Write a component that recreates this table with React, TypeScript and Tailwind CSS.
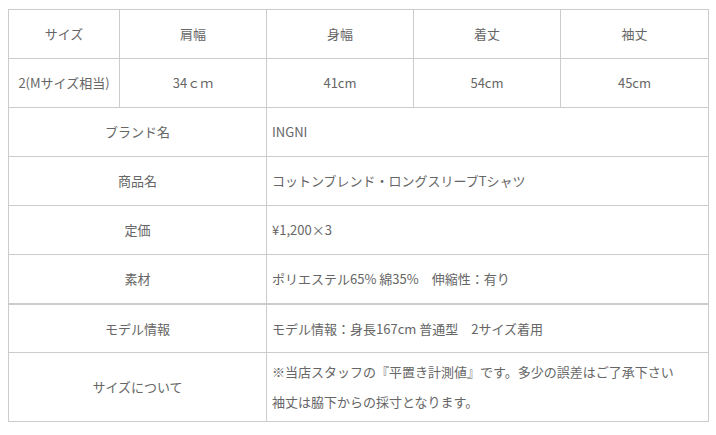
export default function App() {
  const cell = "border border-[#cccccc] text-center align-middle";
  const label = "border border-[#cccccc] text-center align-middle h-[49px]";
  const value = "border border-[#cccccc] text-left align-middle pl-[5px]";

  return (
    <div className="min-h-screen bg-white pt-[9px] pl-[8px] font-['Noto_Sans_CJK_JP',sans-serif] text-[13px] text-[#666666]">
      <table className="table-fixed border-collapse w-[700px]">
        <colgroup>
          <col className="w-[111px]" />
          <col className="w-[147px]" />
          <col className="w-[147px]" />
          <col className="w-[147px]" />
          <col className="w-[148px]" />
        </colgroup>
        <tbody>
          <tr className="h-[49px]">
            <td className={cell}>サイズ</td>
            <td className={cell}>肩幅</td>
            <td className={cell}>身幅</td>
            <td className={cell}>着丈</td>
            <td className={cell}>袖丈</td>
          </tr>
          <tr className="h-[49px]">
            <td className={cell}>2(Mサイズ相当)</td>
            <td className={cell}>34ｃｍ</td>
            <td className={cell}>41cm</td>
            <td className={cell}>54cm</td>
            <td className={cell}>45cm</td>
          </tr>
          <tr className="h-[49px]">
            <td colSpan={2} className={label}>ブランド名</td>
            <td colSpan={3} className={value}>INGNI</td>
          </tr>
          <tr className="h-[49px]">
            <td colSpan={2} className={label}>商品名</td>
            <td colSpan={3} className={value}>コットンブレンド・ロングスリーブTシャツ</td>
          </tr>
          <tr className="h-[49px]">
            <td colSpan={2} className={label}>定価</td>
            <td colSpan={3} className={value}>¥1,200×3</td>
          </tr>
          <tr className="h-[49px]">
            <td colSpan={2} className={`${label} border-b-2`}>素材</td>
            <td colSpan={3} className={`${value} border-b-2`}>ポリエステル65% 綿35%　伸縮性：有り</td>
          </tr>
          <tr className="h-[49px]">
            <td colSpan={2} className={label}>モデル情報</td>
            <td colSpan={3} className={value}>モデル情報：身長167cm 普通型　2サイズ着用</td>
          </tr>
          <tr className="h-[69px]">
            <td colSpan={2} className={label}>サイズについて</td>
            <td colSpan={3} className={`${value} leading-[30px]`}>
              ※当店スタッフの『平置き計測値』です。多少の誤差はご了承下さい
              <br />
              袖丈は脇下からの採寸となります。
            </td>
          </tr>
        </tbody>
      </table>
    </div>
  );
}
